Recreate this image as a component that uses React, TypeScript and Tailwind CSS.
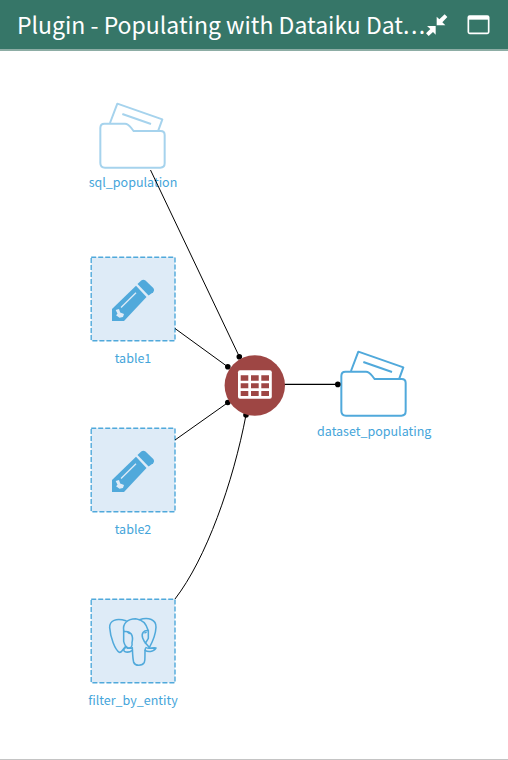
import React from "react";

function Folder({ className }: { className: string }) {
  return (
    <svg viewBox="54 30 207 210" className={`mr-[2px] h-[70px] w-[69px] shrink-0 ${className}`} fill="none" stroke="currentColor" strokeWidth="6" strokeLinejoin="round">
      <path d="M90 99 112 41 247 88 235 121" />
      <path d="M127 72 213 102" />
      <path d="M73 101H135C148 101 151 112 161 123H242Q254 123 254 135V220Q254 233 241 233H75Q61 233 61 219V114Q61 101 73 101Z" fill="white" />
    </svg>
  );
}

function Pencil() {
  return (
    <svg viewBox="0 0 86 86" className="size-full">
      <g fill="#50a9db">
        <path d="M22 53 46 29.7 56.5 41 34 65H22Z" />
        <path d="M47.5 28 51.2 24.6Q53.3 22.8 55.5 24.6L63 31.8Q65 34 63.2 36.3L58.6 39.5Z" />
      </g>
      <path d="M25.7 54 29 53 30.2 56.6 34 58 33 61 29.5 61.8 26 59.2 27.5 57.8Z" fill="#deebf7" />
      <path d="M31 51.5 46 36.7" stroke="#deebf7" strokeWidth="1.3" />
    </svg>
  );
}

function Elephant() {
  return (
    <svg viewBox="-30 -30 258 258" className="size-full" fill="none" stroke="#50a9db" strokeWidth="4.6" strokeLinecap="round" strokeLinejoin="round">
      <path d="M78 38C48 30 29 37 29 58C31 89 45 125 58 133C65 135 70 121 77 115" />
      <path d="M71 67C68 47 82 32 107 32C129 34 139 47 145 68" />
      <path d="M118 35C146 26 169 35 168 58C167 82 158 101 148 119" />
      <path d="M71 67V100Q75 116 83 119C93 122 98 116 96 104C101 83 93 67 71 71" />
      <path d="M145 68C132 66 123 75 128 90C132 103 140 108 148 119M145 68V91L136 106" />
      <path d="M97 119C98 142 98 151 101 163C106 175 127 174 133 163C137 151 133 140 136 122" />
      <path d="M80 118C73 119 69 125 73 130Q85 136 97 127M97 121H82M138 119C148 124 155 118 168 120C160 133 143 132 135 127" />
      <path d="M84 73 88 76M135 74 138 73" strokeWidth="5" />
    </svg>
  );
}

function Dataset({ children }: { children: React.ReactNode }) {
  return (
    <div className="grid size-[86px] shrink-0">
      <svg viewBox="0 0 86 86" className="col-start-1 row-start-1 size-full">
        <rect x="1.2" y="1.2" width="83.8" height="83.6" fill="#deebf7" stroke="#50a9db" strokeWidth="1.4" strokeDasharray="5 2" />
      </svg>
      <div className="col-start-1 row-start-1">{children}</div>
    </div>
  );
}

function Node({ className, label, children }: { className: string; label: string; children: React.ReactNode }) {
  return (
    <div className={`absolute flex w-40 flex-col items-center ${className}`}>
      {children}
      <span className="text-[12.5px] leading-5 whitespace-nowrap text-[#45a5da]">{label}</span>
    </div>
  );
}

export default function App() {
  return (
    <div className="flex h-[760px] w-[508px] flex-col overflow-hidden border-b border-[#c4c4c4] bg-white font-['Noto_Sans_CJK_SC',sans-serif]">
      <header className="flex h-[51px] shrink-0 items-center border-b-2 border-[#8dada5] bg-[#367668] pl-[17px] text-white">
        <h1 className="w-[408px] pb-[2px] text-[23px] leading-9 whitespace-nowrap">
          Plugin - Populating with Dataiku Dat<span className="tracking-[1.5px]">...</span>
        </h1>
        <svg viewBox="525 40 200 66" className="h-[22px] w-[66.7px] shrink-0">
          <g fill="white">
            <path d="M560 74V48L568 56 584 41 592 49 577 65 586 74Z" />
            <path d="M557 76V102L549 94 536 106 528 98 541 85 531 76Z" />
          </g>
          <rect x="655" y="46" width="61" height="52" rx="4" fill="none" stroke="white" strokeWidth="5" />
          <path d="M655 46H716V57H655Z" fill="white" />
        </svg>
      </header>
      <main className="relative flex-1">
        <Node className="top-[48.6px] left-[53px] gap-[2.4px]" label="sql_population"><Folder className="text-[#a6d3ed]" /></Node>
        <Node className="top-[205px] left-[53px] gap-[6px]" label="table1"><Dataset><Pencil /></Dataset></Node>
        <Node className="top-[376px] left-[53px] gap-[6px]" label="table2"><Dataset><Pencil /></Dataset></Node>
        <Node className="top-[547px] left-[53px] gap-[6px]" label="filter_by_entity"><Dataset><Elephant /></Dataset></Node>
        <Node className="top-[297.3px] left-[294.2px] gap-[2.7px]" label="dataset_populating"><Folder className="text-[#50a9db]" /></Node>
        <svg viewBox="0 51 508 708" className="absolute inset-0 h-[708px] w-[508px]">
          <g stroke="black" fill="none">
            <path d="M150.5 170 239.5 357M175 328.5 228 367M175 440 228 402.5M175 599C206 559 233 483 246 415" strokeWidth="1" />
            <path d="M284 384.4H338" strokeWidth="1.3" />
          </g>
          <circle cx="239.3" cy="356.7" r="2.8" />
          <circle cx="227.8" cy="366.7" r="2.8" />
          <circle cx="227.8" cy="402.5" r="2.8" />
          <circle cx="246" cy="415" r="2.8" />
          <circle cx="337.8" cy="384.4" r="2.8" />
          <circle cx="254.8" cy="385.5" r="30.2" fill="#9e4644" />
          <rect x="238" y="370.2" width="33.8" height="28.6" rx="2" fill="white" />
          <g fill="#9e4644">
            <path d="M240.7 375.3h7.6v5.4h-7.6zM251 375.3h7.7v5.4H251zM261.3 375.3h7.7v5.4h-7.7z" />
            <path d="M240.7 383.2h7.6v5h-7.6zM251 383.2h7.7v5H251zM261.3 383.2h7.7v5h-7.7z" />
            <path d="M240.7 390.9h7.6v5h-7.6zM251 390.9h7.7v5H251zM261.3 390.9h7.7v5h-7.7z" />
          </g>
        </svg>
      </main>
    </div>
  );
}
